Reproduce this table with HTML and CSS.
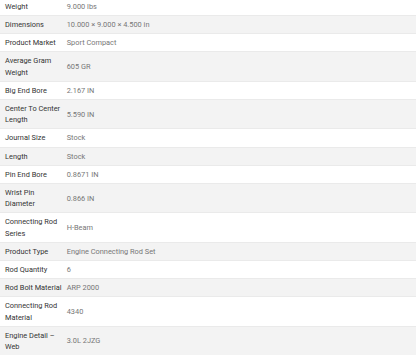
FILE: index.html
```html
<!DOCTYPE html>
<html>
<head>
<meta charset="utf-8">
<link rel="stylesheet" href="styles.css">
</head>
<body>
<table class="attrs">
<tr><th>Weight</th><td>9.000 lbs</td></tr>
<tr><th>Dimensions</th><td>10.000 × 9.000 × 4.500 in</td></tr>
<tr><th>Product Market</th><td>Sport Compact</td></tr>
<tr><th>Average Gram Weight</th><td>605 GR</td></tr>
<tr><th>Big End Bore</th><td>2.167 IN</td></tr>
<tr><th>Center To Center Length</th><td>5.590 IN</td></tr>
<tr><th>Journal Size</th><td>Stock</td></tr>
<tr><th>Length</th><td>Stock</td></tr>
<tr><th>Pin End Bore</th><td>0.8671 IN</td></tr>
<tr><th>Wrist Pin Diameter</th><td>0.866 IN</td></tr>
<tr><th>Connecting Rod Series</th><td>H-Beam</td></tr>
<tr><th>Product Type</th><td>Engine Connecting Rod Set</td></tr>
<tr><th>Rod Quantity</th><td>6</td></tr>
<tr><th>Rod Bolt Material</th><td>ARP 2000</td></tr>
<tr><th>Connecting Rod Material</th><td>4340</td></tr>
<tr><th>Engine Detail – Web</th><td>3.0L 2JZG</td></tr>
</table>
</body>
</html>
```
FILE: styles.css
```css
html, body {
  margin: 0;
  padding: 0;
  background: #fff;
}
.attrs {
  width: 100%;
  border-collapse: collapse;
  table-layout: fixed;
  margin-top: -2.3px;
  font-family: Roboto, "Liberation Sans", sans-serif;
  font-size: 7.4px;
  line-height: 11.2px;
}
.attrs tr:nth-child(even) {
  background: #f3f3f3;
}
.attrs tr {
  border-bottom: 1px solid #eaeaea;
}
.attrs th {
  width: 58px;
  text-align: left;
  vertical-align: middle;
  font-weight: 400;
  color: #333;
  padding: 3px 0 3px 5px;
}
.attrs td {
  color: #777;
  vertical-align: middle;
  padding: 3px 4px 3px 3.7px;
}
```
